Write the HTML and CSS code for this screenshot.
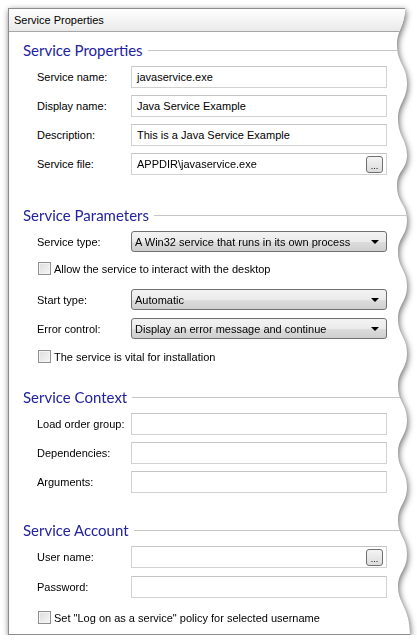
FILE: index.html
```html
<!DOCTYPE html>
<html lang="en">
<head>
    <meta charset="UTF-8">
    <title>Service Properties</title>
    <link rel="stylesheet" href="styles.css">
</head>
<body>
    <div class="sheet">
        <div class="panel">
            <div class="titlebar">Service Properties</div>

            <section class="group group-props">
                <h2 class="group-title">Service Properties</h2>
                <div class="fields">
                    <label>Service name:</label>
                    <div class="edit">javaservice.exe</div>
                    <label>Display name:</label>
                    <div class="edit">Java Service Example</div>
                    <label>Description:</label>
                    <div class="edit">This is a Java Service Example</div>
                    <label>Service file:</label>
                    <div class="edit"><span class="grow">APPDIR\javaservice.exe</span><span class="browse">...</span></div>
                </div>
            </section>

            <section class="group group-params">
                <h2 class="group-title">Service Parameters</h2>
                <div class="line">
                    <label>Service type:</label>
                    <div class="combo"><span class="grow">A Win32 service that runs in its own process</span><span class="arrow"></span></div>
                </div>
                <div class="check check-desktop"><span class="box"></span>Allow the service to interact with the desktop</div>
                <div class="line line-start">
                    <label>Start type:</label>
                    <div class="combo"><span class="grow">Automatic</span><span class="arrow"></span></div>
                </div>
                <div class="line line-error">
                    <label>Error control:</label>
                    <div class="combo"><span class="grow">Display an error message and continue</span><span class="arrow"></span></div>
                </div>
                <div class="check check-vital"><span class="box"></span>The service is vital for installation</div>
            </section>

            <section class="group group-context">
                <h2 class="group-title">Service Context</h2>
                <div class="fields">
                    <label>Load order group:</label>
                    <div class="edit"></div>
                    <label>Dependencies:</label>
                    <div class="edit"></div>
                    <label>Arguments:</label>
                    <div class="edit"></div>
                </div>
            </section>

            <section class="group group-account">
                <h2 class="group-title">Service Account</h2>
                <div class="fields fields-wide">
                    <label>User name:</label>
                    <div class="edit"><span class="grow"></span><span class="browse">...</span></div>
                    <label>Password:</label>
                    <div class="edit"></div>
                </div>
                <div class="check check-policy"><span class="box"></span>Set "Log on as a service" policy for selected username</div>
            </section>
        </div>
    </div>
</body>
</html>
```

FILE: styles.css
```css
body {
    margin: 0;
    background-color: #ffffff;
    font-family: 'Liberation Sans', Arial, sans-serif;
    font-size: 11px;
    color: #000000;
}
.sheet {
    padding: 8px 0 0 8px;
    filter: drop-shadow(1px 2px 3px rgba(0, 0, 0, 0.6));
}
.panel {
    width: 404px;
    height: 627px;
    box-sizing: border-box;
    background-color: #ffffff;
    border: 1px solid #8c8c8c;
    clip-path: path('M0,0 L397,0 C397,18 389,22 389,37 C389,55 399,58 399,75 C399,92 390,95 390,111 C390,128 399,132 399,147 C399,162 389,162 389,178 C389,195 399,196 399,212 C399,228 390,229 390,244 C390,260 399,262 399,278 C399,294 390,296 390,311 C390,327 399,329 399,345 C399,361 390,363 390,378 C390,394 399,396 399,412 C399,428 390,430 390,445 C390,461 399,463 399,479 C399,495 390,497 390,512 C390,528 399,530 399,546 C399,562 390,564 390,579 C390,595 402,600 402,627 L0,627 Z');
}
.titlebar {
    height: 22px;
    line-height: 22px;
    padding-left: 5px;
    background: linear-gradient(#ffffff, #eaeaea);
    border-bottom: 1px solid #a6a6a6;
}
.group {
    padding-left: 14px;
}
.group-title {
    display: flex;
    align-items: center;
    height: 18px;
    margin: 0 0 7px 0;
    font-family: 'Lato', 'Noto Sans', sans-serif;
    font-size: 15px;
    font-weight: normal;
    color: #22229f;
}
.group-title::after {
    content: "";
    flex: 1;
    height: 1px;
    margin-left: 5px;
    background-color: #c6c6c6;
}
.group-props { padding-top: 9px; }
.group-params { padding-top: 31px; }
.group-context { padding-top: 25px; }
.group-account { padding-top: 28px; }

.fields {
    display: grid;
    grid-template-columns: 94px 256px;
    grid-auto-rows: 22px;
    row-gap: 7px;
    align-items: center;
    padding-left: 14px;
}
.fields-wide {
    row-gap: 8px;
}
.edit {
    height: 22px;
    box-sizing: border-box;
    display: flex;
    align-items: center;
    padding: 0 3px 0 5px;
    border: 1px solid #d2d2d2;
    border-top-color: #c4c4c4;
    background-color: #ffffff;
}
.grow {
    flex: 1;
    white-space: nowrap;
    overflow: hidden;
}
.browse {
    width: 17px;
    height: 17px;
    box-sizing: border-box;
    border: 1px solid #707070;
    border-radius: 3px;
    background: linear-gradient(#f4f4f4, #dcdcdc);
    font-size: 9px;
    line-height: 18px;
    text-align: center;
}
.line {
    display: grid;
    grid-template-columns: 94px 256px;
    align-items: center;
    padding-left: 14px;
}
.line-start { margin-top: 14px; }
.line-error { margin-top: 8px; }
.combo {
    height: 21px;
    box-sizing: border-box;
    display: flex;
    align-items: center;
    padding: 0 7px 0 3px;
    border: 1px solid #707070;
    border-radius: 3px;
    background: linear-gradient(#f3f3f3 0%, #ebebeb 50%, #dddddd 51%, #cfcfcf 100%);
}
.arrow {
    width: 0;
    height: 0;
    border-left: 4px solid transparent;
    border-right: 4px solid transparent;
    border-top: 4px solid #000000;
}
.check {
    display: flex;
    align-items: center;
    height: 13px;
    padding-left: 15px;
}
.check-desktop { margin-top: 10px; }
.check-vital { margin-top: 11px; }
.check-policy { margin-top: 13px; }
.box {
    width: 13px;
    height: 13px;
    box-sizing: border-box;
    margin-right: 3px;
    border: 1px solid #8e8f8f;
    background: linear-gradient(135deg, #dcdcdc, #f6f6f6);
    box-shadow: inset 0 0 0 1px #f4f4f4;
}
```
